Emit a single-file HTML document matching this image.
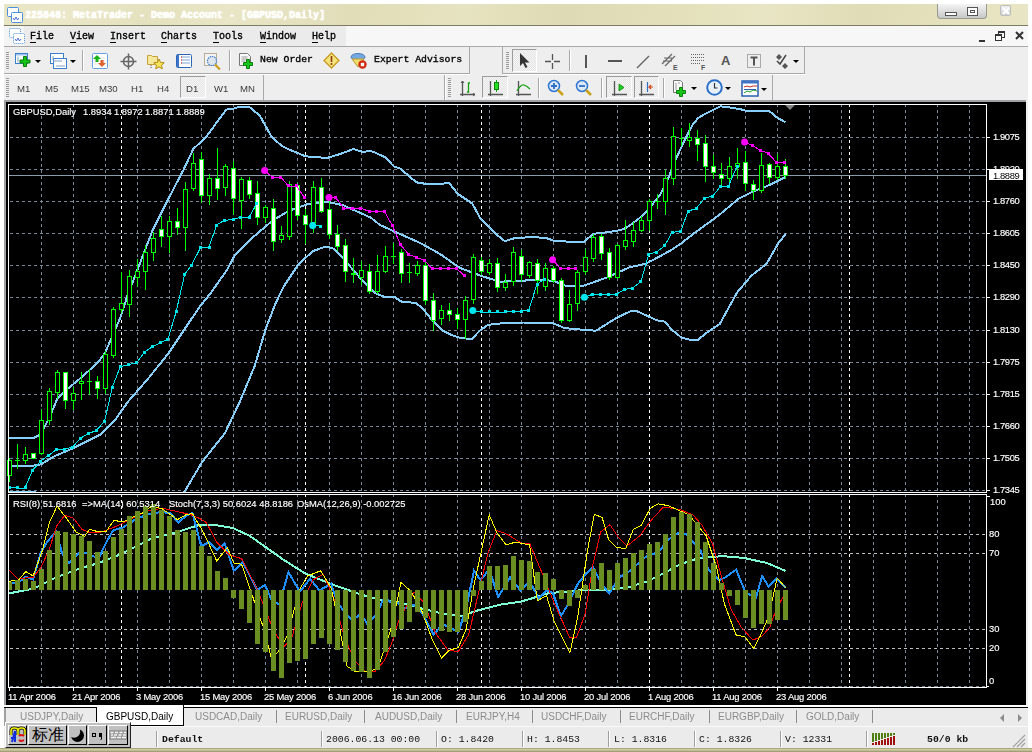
<!DOCTYPE html>
<html><head><meta charset="utf-8">
<style>
*{margin:0;padding:0;box-sizing:border-box}
html,body{width:1032px;height:752px;overflow:hidden;background:#fff}
body{position:relative;font-family:"Liberation Sans",sans-serif}
.abs{position:absolute}
#title{position:absolute;left:4px;top:4px;width:1024px;height:22px;background:linear-gradient(100deg,#e8e5c4 0%,#ebe8ca 6%,#e4e1be 14%,#e9e6c7 22%,#e1ddb9 34%,#e6e3c0 45%,#dedab5 55%,#e3e0bb 66%,#e8e5c4 74%,#e0dcb7 84%,#e9e6c5 100%);border-bottom:1px solid #7d7b63}
#title .t{position:absolute;left:21px;top:5px;font:bold 10px/13px "Liberation Mono",monospace;color:#ffffff;text-shadow:0 0 1px #fff,0 0 2px #fffff0}
#menu{position:absolute;left:4px;top:26px;width:1024px;height:21px;background:#f7f7f7;border-bottom:1px solid #a9a9a9}
#menu .lp{position:absolute;left:20px;top:0;width:322px;height:20px;background:#ebebeb}
#menu .ic{position:absolute;left:0;top:0;width:20px;height:20px;background:#f4f4f4}
.mi{position:absolute;top:5px;font:10px/12px "Liberation Mono",monospace;color:#000;-webkit-text-stroke:0.35px #000}
.mi u{text-decoration:none;border-bottom:1px solid #000}
.tb{position:absolute;background:#eeeeee}
.grip{position:absolute;width:3px;background:repeating-linear-gradient(180deg,#9a9a9a 0 1px,transparent 1px 2px)}
.vsep{position:absolute;width:2px;border-left:1px solid #a8a8a8;border-right:1px solid #fff}
.pressed{position:absolute;border-top:1px solid #9c9c9c;border-left:1px solid #9c9c9c;border-right:1px solid #fff;border-bottom:1px solid #fff;background-color:#f6f6f6;background-image:linear-gradient(45deg,#e4e4e4 25%,transparent 25%,transparent 75%,#e4e4e4 75%),linear-gradient(45deg,#e4e4e4 25%,transparent 25%,transparent 75%,#e4e4e4 75%);background-size:2px 2px;background-position:0 0,1px 1px}
.tt{position:absolute;font:9.8px/12px "Liberation Mono",monospace;color:#000;-webkit-text-stroke:0.35px #000}
.tf{position:absolute;font:9.6px/12px "Liberation Sans",sans-serif;color:#3c3c3c}
.ct{position:absolute;font:9.4px/12px "Liberation Sans",sans-serif;color:#fff;white-space:pre;-webkit-text-stroke:0.15px #fff;will-change:transform}
.cp{letter-spacing:-0.4px}
.cd{letter-spacing:-0.2px}
.pricebox{position:absolute;left:989px;top:169px;width:34px;height:11px;background:#fff;color:#000;font:9.4px/11px "Liberation Sans",sans-serif;padding-left:4px;letter-spacing:-0.4px;will-change:transform;border-top:1px solid #fff}
.pricebox:before{content:"";position:absolute;left:-2px;top:-1px;width:2px;height:1px;background:#fff}
#tabs{position:absolute;left:4px;top:705px;width:1024px;height:23px;background:#ebebeb}
.tab{position:absolute;top:6px;font:10px/12px "Liberation Sans",sans-serif;color:#8c8c8c;white-space:pre}
.tsep{position:absolute;top:5px;width:1px;height:13px;background:#8c8c8c}
#status{position:absolute;left:4px;top:728px;width:1024px;height:20px;background:#ebebeb}
.st{position:absolute;top:6px;font:9.8px/12px "Liberation Mono",monospace;color:#111;white-space:pre}
.ssep{position:absolute;top:3px;width:2px;height:16px;border-left:1px solid #a0a0a0;border-right:1px solid #fff}
#bottom{position:absolute;left:0;top:748px;width:1032px;height:4px;background:linear-gradient(180deg,#8c8a5c 0,#c8c59a 1px,#d9d6ae 2px,#a19f75 3px)}
.tf,.tt,.st,.tab,.mi,#title .t{will-change:transform}
</style></head><body>
<div id="title">
 <svg class="abs" style="left:3px;top:3px" width="16" height="16" viewBox="0 0 16 16"><rect x="0.5" y="0.5" width="11" height="9" rx="1" fill="#fff" stroke="#4a90d9"/><rect x="4.5" y="5.5" width="11" height="10" rx="1" fill="#fff" stroke="#4a90d9"/><path d="M6 11l1.5 2 1.5-3 1.5 3 1.5-2" stroke="#4a6fd9" fill="none"/></svg>
 <div class="t">225848: MetaTrader - Demo Account - [GBPUSD,Daily]</div>
 <div class="abs" style="left:933px;top:0px;width:50px;height:15px;border:1px solid #9a9a90;border-top:none;border-radius:0 0 4px 4px;background:linear-gradient(180deg,#f4f4f4,#c8c8c8)"></div>
 <div class="abs" style="left:941px;top:8px;width:12px;height:4px;border:1px solid #555;background:#fff"></div>
 <div class="abs" style="left:963px;top:3px;width:11px;height:9px;border:1px solid #555;background:#fff"><div class="abs" style="left:2px;top:2px;width:5px;height:3px;border:1px solid #555"></div></div>
 <div class="abs" style="left:996px;top:1px;width:11px;height:11px;background:linear-gradient(180deg,#f2f2f2,#cfcfcf);border:1px solid #bdbdbd;border-radius:2px"></div>
 <svg class="abs" style="left:997px;top:2px" width="10" height="10"><path d="M2 2L8 8M8 2L2 8" stroke="#fff" stroke-width="2.2"/></svg>
</div>
<div id="menu">
 <div class="ic"></div><div class="lp"></div>
 <svg class="abs" style="left:5px;top:2px" width="16" height="16" viewBox="0 0 16 16"><rect x="0.5" y="0.5" width="11" height="9" rx="1" fill="#fff" stroke="#4a90d9" stroke-dasharray="1 1"/><rect x="4.5" y="5.5" width="11" height="10" rx="1" fill="#fff" stroke="#4a90d9" stroke-dasharray="1 1"/><path d="M6 11l1.5 2 1.5-3 1.5 3 1.5-2" stroke="#4a6fd9" fill="none"/></svg>
 <div class="mi" style="left:26px"><u>F</u>ile</div>
 <div class="mi" style="left:66px"><u>V</u>iew</div>
 <div class="mi" style="left:106px"><u>I</u>nsert</div>
 <div class="mi" style="left:157px"><u>C</u>harts</div>
 <div class="mi" style="left:209px"><u>T</u>ools</div>
 <div class="mi" style="left:256px"><u>W</u>indow</div>
 <div class="mi" style="left:308px"><u>H</u>elp</div>
 <div class="abs" style="left:975px;top:14px;width:6px;height:2px;background:#333"></div>
 <div class="abs" style="left:994px;top:5px;width:7px;height:7px;border:1px solid #333;border-top-width:2px"></div>
 <div class="abs" style="left:991px;top:8px;width:7px;height:7px;border:1px solid #333;border-top-width:2px;background:#f7f7f7"></div>
 <svg class="abs" style="left:1011px;top:5px" width="10" height="10"><path d="M1 1L8 8M8 1L1 8" stroke="#333" stroke-width="2"/></svg>
</div>
<div class="tb" style="left:4px;top:47px;width:1024px;height:53px"></div>
<!-- row1 group1 -->
<div class="abs" style="left:4px;top:47px;width:466px;height:27px;border-right:1px solid #a8a8a8;border-bottom:1px solid #a8a8a8"></div>
<div class="abs" style="left:4px;top:74px;width:466px;height:1px;background:#fff"></div>
<div class="grip" style="left:6px;top:52px;height:18px"></div>
<svg class="abs" style="left:14px;top:52px" width="28" height="18">
 <rect x="1.5" y="1.5" width="12" height="10" fill="#fff" stroke="#3d7fcc"/><rect x="2" y="2" width="11" height="1.5" fill="#9cc3ee"/>
 <path d="M4 4.5v6" stroke="#8aa2bf"/>
 <path d="M9.5 4.5h3v3.5h3.5v3h-3.5v3.5h-3v-3.5h-3.5v-3h3.5z" fill="#16c416" stroke="#0b7f0b"/>
 <path d="M21 8h6l-3 3z" fill="#000"/>
</svg>
<svg class="abs" style="left:49px;top:52px" width="28" height="18">
 <rect x="1.5" y="1.5" width="13" height="10" fill="#fff" stroke="#3d7fcc"/><rect x="4.5" y="6.5" width="13" height="10" fill="#fff" stroke="#3d7fcc"/>
 <path d="M4 9h9M7 14h9M4 4v4" stroke="#7f9fc2"/>
 <path d="M21 8h6l-3 3z" fill="#000"/>
</svg>
<div class="vsep" style="left:82px;top:50px;height:21px"></div>
<svg class="abs" style="left:91px;top:52px" width="18" height="18">
 <rect x="1.5" y="1.5" width="15" height="15" rx="1" fill="#fff" stroke="#62a0e0"/>
 <path d="M3 6h11M3 9h11M3 12h11" stroke="#e4e4e4"/>
 <path d="M6 3l4 4h-2.5v3h-3v-3H2z" fill="#17b317"/><path d="M11 15l-4-4h2.5v-3h3v3H15z" fill="#e0602a"/>
</svg>
<svg class="abs" style="left:120px;top:53px" width="17" height="17">
 <circle cx="8.5" cy="8.5" r="5" fill="none" stroke="#666" stroke-width="1.5"/><path d="M8.5 0.5v16M0.5 8.5h16" stroke="#666" stroke-width="1.5"/>
</svg>
<svg class="abs" style="left:146px;top:52px" width="20" height="18">
 <path d="M1.5 3.5h4l1 1h5v8h-10z" fill="#f6e89a" stroke="#c6a23a"/><path d="M5 13v4" stroke="#555" stroke-dasharray="1 1"/>
 <path d="M13 7l1.6 3.4 3.6.4-2.7 2.4.8 3.6-3.3-1.9-3.3 1.9.8-3.6-2.7-2.4 3.6-.4z" fill="#f7e35c" stroke="#b48a10"/>
</svg>
<svg class="abs" style="left:175px;top:53px" width="18" height="16">
 <rect x="1.5" y="1.5" width="15" height="13" rx="1" fill="#fff" stroke="#2c66b8"/>
 <rect x="2" y="2" width="2" height="12" fill="#3d75c8"/>
 <path d="M6 4h9M6 7h9M6 10h9" stroke="#7ea3d6"/><path d="M6 4h1M6 7h1M6 10h1" stroke="#e02020"/>
</svg>
<svg class="abs" style="left:203px;top:53px" width="20" height="18">
 <rect x="1.5" y="0.5" width="12" height="12" fill="#f3f3f3" stroke="#b8ae98"/>
 <circle cx="9" cy="8" r="4.5" fill="#dfe6ee" stroke="#3f7fd0" stroke-width="1.2" stroke-dasharray="1.5 0.8"/>
 <path d="M12 11.5l5 5" stroke="#c8a020" stroke-width="2.2"/>
</svg>
<div class="vsep" style="left:229px;top:50px;height:21px"></div>
<svg class="abs" style="left:238px;top:52px" width="18" height="19">
 <path d="M1.5 1.5h8l3 3v9h-11z" fill="#fafafa" stroke="#777"/><path d="M3.5 5h6M3.5 7h6M3.5 9h4" stroke="#999"/>
 <path d="M8.5 7.5h3v3h3v3h-3v3h-3v-3h-3v-3h3z" fill="#18c418" stroke="#0b800b"/>
</svg>
<div class="tt" style="left:260px;top:54px">New Order</div>
<svg class="abs" style="left:323px;top:52px" width="17" height="17">
 <path d="M8.5 1L16 8.5L8.5 16L1 8.5z" fill="#f5e27a" stroke="#c79b20" stroke-width="1.3"/>
 <path d="M8.5 4v6" stroke="#8b3a1a" stroke-width="1.6"/><circle cx="8.5" cy="12" r="1" fill="#8b3a1a"/>
</svg>
<svg class="abs" style="left:350px;top:52px" width="18" height="18">
 <ellipse cx="8" cy="5" rx="7" ry="3.5" fill="#76a9e0" stroke="#4a7bb8"/>
 <path d="M2 7l6 8 6-8z" fill="#f2dd6a" stroke="#b89a30"/>
 <circle cx="12.5" cy="12.5" r="4.2" fill="#d02a10"/><rect x="10.8" y="10.8" width="3.4" height="3.4" fill="#fff"/>
</svg>
<div class="tt" style="left:374px;top:54px">Expert Advisors</div>
<!-- row1 group gap and group2 -->
<div class="abs" style="left:502px;top:47px;width:1px;height:27px;background:#a8a8a8"></div>
<div class="abs" style="left:503px;top:47px;width:302px;height:27px;border-right:1px solid #a8a8a8;border-bottom:1px solid #a8a8a8"></div>
<div class="abs" style="left:503px;top:74px;width:302px;height:1px;background:#fff"></div>
<div class="grip" style="left:506px;top:52px;height:18px"></div>
<div class="pressed" style="left:512px;top:49px;width:25px;height:23px"></div>
<svg class="abs" style="left:517px;top:52px" width="14" height="17"><path d="M3 1v13l3-3 2.5 5 2-1-2.5-4.5h4.5z" fill="#333"/></svg>
<svg class="abs" style="left:544px;top:53px" width="17" height="17"><path d="M8.5 1v15M1 8.5h15" stroke="#555" stroke-width="1.3"/><rect x="7" y="7" width="3" height="3" fill="#eee"/></svg>
<div class="vsep" style="left:569px;top:50px;height:21px"></div>
<div class="abs" style="left:585px;top:55px;width:2px;height:13px;background:#555"></div>
<div class="abs" style="left:608px;top:60px;width:14px;height:2px;background:#555"></div>
<svg class="abs" style="left:636px;top:55px" width="14" height="14"><path d="M1 13L13 1" stroke="#666" stroke-width="1.5"/></svg>
<svg class="abs" style="left:661px;top:53px" width="18" height="17"><path d="M1 11L11 1M4 13L14 3M2 8l9 0M3 5l8 0" stroke="#666" stroke-width="1.2"/><text x="12" y="17" font-family="Liberation Sans" font-weight="bold" font-size="7" fill="#555">E</text></svg>
<svg class="abs" style="left:690px;top:53px" width="18" height="17"><path d="M1 1.5h13M1 4.5h13M1 7.5h13M1 10.5h9" stroke="#666" stroke-dasharray="1 1"/><text x="11" y="17" font-family="Liberation Sans" font-weight="bold" font-size="7" fill="#555">F</text></svg>
<div class="abs" style="left:721px;top:52px;font:bold 13px/17px 'Liberation Sans',sans-serif;color:#555">A</div>
<svg class="abs" style="left:747px;top:53px" width="15" height="16"><rect x="0.5" y="1.5" width="13" height="13" fill="none" stroke="#666" stroke-dasharray="1 1"/><path d="M3.5 4.5h7M7 4.5v8" stroke="#555" stroke-width="2"/></svg>
<svg class="abs" style="left:775px;top:53px" width="25" height="17"><path d="M4 1l3 3-3 3-3-3z M10 10l3 3-3 3-3-3z" fill="#555"/><path d="M2 8l3 3 6-9" stroke="#444" stroke-width="1.5" fill="none"/><path d="M18 7h6l-3 3z" fill="#000"/></svg>
<!-- row2 group1 -->
<div class="abs" style="left:4px;top:75px;width:260px;height:25px;border-right:1px solid #a8a8a8"></div>
<div class="grip" style="left:6px;top:78px;height:19px"></div>
<div class="pressed" style="left:180px;top:76px;width:26px;height:22px"></div>
<div class="tf" style="left:17px;top:83px">M1</div>
<div class="tf" style="left:45px;top:83px">M5</div>
<div class="tf" style="left:71px;top:83px">M15</div>
<div class="tf" style="left:99px;top:83px">M30</div>
<div class="tf" style="left:131px;top:83px">H1</div>
<div class="tf" style="left:157px;top:83px">H4</div>
<div class="tf" style="left:186px;top:83px">D1</div>
<div class="tf" style="left:214px;top:83px">W1</div>
<div class="tf" style="left:240px;top:83px">MN</div>
<!-- row2 group2 -->
<div class="vsep" style="left:444px;top:75px;height:25px"></div>
<div class="abs" style="left:446px;top:75px;width:327px;height:25px;border-right:1px solid #a8a8a8"></div>
<div class="grip" style="left:448px;top:78px;height:19px"></div>
<svg class="abs" style="left:459px;top:80px" width="17" height="17"><path d="M3.5 1v15M1 14.5h15" stroke="#555" stroke-width="1.3"/><path d="M2 3l1.5-2 1.5 2M14 13l2 1.5-2 1.5" stroke="#555" fill="none"/><path d="M8 12h1.5V3H11" stroke="#10a010" stroke-width="1.3" fill="none"/></svg>
<div class="pressed" style="left:482px;top:76px;width:26px;height:22px"></div>
<svg class="abs" style="left:487px;top:80px" width="17" height="17"><path d="M3.5 1v15M1 14.5h15" stroke="#555" stroke-width="1.3"/><path d="M9.5 0v12" stroke="#10a010"/><rect x="7.5" y="2.5" width="4" height="7" fill="#20e020" stroke="#108010"/></svg>
<svg class="abs" style="left:515px;top:80px" width="17" height="17"><path d="M3.5 1v15M1 14.5h15" stroke="#555" stroke-width="1.3"/><path d="M2 11q4-7 7-6t6 4" stroke="#10a010" stroke-width="1.2" fill="none"/></svg>
<div class="vsep" style="left:538px;top:78px;height:20px"></div>
<svg class="abs" style="left:547px;top:79px" width="18" height="18"><circle cx="7" cy="7" r="5.5" fill="#dce9f7" stroke="#2d76d2" stroke-width="1.5"/><path d="M4 7h6M7 4v6" stroke="#2d6fc0" stroke-width="1.8"/><path d="M11 11l5 5" stroke="#c9a21a" stroke-width="2.5"/></svg>
<svg class="abs" style="left:575px;top:79px" width="18" height="18"><circle cx="7" cy="7" r="5.5" fill="#dce9f7" stroke="#2d76d2" stroke-width="1.5"/><path d="M4 7h6" stroke="#2d6fc0" stroke-width="1.8"/><path d="M11 11l5 5" stroke="#c9a21a" stroke-width="2.5"/></svg>
<div class="vsep" style="left:601px;top:78px;height:20px"></div>
<div class="pressed" style="left:606px;top:76px;width:26px;height:22px"></div>
<svg class="abs" style="left:611px;top:80px" width="17" height="17"><path d="M3.5 1v15M1 14.5h15" stroke="#555" stroke-width="1.3"/><path d="M8 4l5 3.5-5 3.5z" fill="#20d020" stroke="#108010" stroke-width="0.8"/></svg>
<div class="pressed" style="left:634px;top:76px;width:25px;height:22px"></div>
<svg class="abs" style="left:638px;top:80px" width="17" height="17"><path d="M3.5 1v15M1 14.5h15" stroke="#555" stroke-width="1.3"/><path d="M9.5 2v10" stroke="#2d6fc0" stroke-width="1.2"/><path d="M15 7h-4M13 5l-2 2 2 2" stroke="#d04010" stroke-width="1.2" fill="none"/></svg>
<div class="vsep" style="left:663px;top:78px;height:20px"></div>
<svg class="abs" style="left:672px;top:79px" width="26" height="19"><path d="M1.5 1.5h7l2 2v10h-9z" fill="#fafafa" stroke="#777"/><path d="M4 4v7M6 4h2" stroke="#999"/><path d="M7.5 8.5h3v3h3v3h-3v3h-3v-3h-3v-3h3z" fill="#18c418" stroke="#0b800b"/><path d="M19 8h6l-3 3z" fill="#000"/></svg>
<svg class="abs" style="left:706px;top:79px" width="26" height="18"><circle cx="8.5" cy="8.5" r="7.3" fill="#e8f0fa" stroke="#2a6fc8" stroke-width="2"/><path d="M8.5 4v5h3" stroke="#333" stroke-width="1.2" fill="none"/><path d="M19 8h6l-3 3z" fill="#000"/></svg>
<svg class="abs" style="left:741px;top:80px" width="26" height="17"><rect x="1" y="1" width="16" height="15" fill="#fff" stroke="#2a5fb0" stroke-width="1.5"/><rect x="1" y="1" width="16" height="2.5" fill="#3d74c6"/><path d="M3 7l3-1 3 1 3-1 4 0" stroke="#c03020" fill="none"/><path d="M3 13l3-2 3 1 3-2 4 1" stroke="#20a020" fill="none"/><path d="M3 9.5h12" stroke="#2a5fb0"/><path d="M20 8h6l-3 3z" fill="#000"/></svg>

<div class="abs" style="left:4px;top:100px;width:1024px;height:1px;background:#a0a0a0"></div>
<div class="abs" style="left:4px;top:101px;width:1022px;height:1px;background:#a0a0a8"></div>
<div class="abs" style="left:4px;top:100px;width:1px;height:605px;background:#a0a0a0"></div>
<div class="abs" style="left:5px;top:100px;width:1px;height:605px;background:#a0a0a8"></div>
<div class="abs" style="left:1026px;top:100px;width:2px;height:605px;background:#f0f0f0"></div>
<svg width="1032" height="752" style="position:absolute;left:0;top:0"><rect x="6" y="102" width="1020" height="603" fill="#000"/><path d="M41.5 104V492 M73.5 104V492 M105.5 104V492 M137.5 104V492 M169.5 104V492 M201.5 104V492 M233.5 104V492 M265.5 104V492 M297.5 104V492 M329.5 104V492 M361.5 104V492 M393.5 104V492 M425.5 104V492 M457.5 104V492 M489.5 104V492 M521.5 104V492 M553.5 104V492 M585.5 104V492 M617.5 104V492 M649.5 104V492 M681.5 104V492 M713.5 104V492 M745.5 104V492 M777.5 104V492 M809.5 104V492 M841.5 104V492 M873.5 104V492 M905.5 104V492 M937.5 104V492 M969.5 104V492 M10 137.5H986 M10 169.5H986 M10 201.5H986 M10 233.5H986 M10 265.5H986 M10 297.5H986 M10 330.5H986 M10 362.5H986 M10 394.5H986 M10 426.5H986 M10 458.5H986 M10 490.5H986" stroke="#778899" stroke-width="1" stroke-dasharray="3 3" fill="none" shape-rendering="crispEdges"/><path d="M41.5 494V687 M73.5 494V687 M105.5 494V687 M137.5 494V687 M169.5 494V687 M201.5 494V687 M233.5 494V687 M265.5 494V687 M297.5 494V687 M329.5 494V687 M361.5 494V687 M393.5 494V687 M425.5 494V687 M457.5 494V687 M489.5 494V687 M521.5 494V687 M553.5 494V687 M585.5 494V687 M617.5 494V687 M649.5 494V687 M681.5 494V687 M713.5 494V687 M745.5 494V687 M777.5 494V687 M809.5 494V687 M841.5 494V687 M873.5 494V687 M905.5 494V687 M937.5 494V687 M969.5 494V687 M10 686.5H986" stroke="#778899" stroke-width="1" stroke-dasharray="3 3" fill="none" shape-rendering="crispEdges"/><path d="M10 534.5H986 M10 553.5H986 M10 629.5H986 M10 648.5H986" stroke="#C0C0C0" stroke-width="1" stroke-dasharray="3 3" fill="none" shape-rendering="crispEdges"/><path d="M121.5 104V492M121.5 494V687 M305.5 104V492M305.5 494V687 M481.5 104V492M481.5 494V687 M649.5 104V492M649.5 494V687 M849.5 104V492M849.5 494V687" stroke="#FFFFFF" stroke-width="1" stroke-dasharray="3 3" fill="none" shape-rendering="crispEdges"/><path d="M9 175.5H986" stroke="#8C9BAA" stroke-width="1" shape-rendering="crispEdges"/><g fill="none" stroke="#87CEFA" stroke-width="2" stroke-linejoin="round" shape-rendering="crispEdges"><polyline points="8.0,438.0 29.4,438.0 32.7,438.5 40.9,434.4 50.4,415.3 57.2,399.0 65.4,390.8 81.7,377.2 98.1,362.2 104.9,353.2 111.7,337.7 119.9,318.6 129.4,290.0 133.5,280.0 137.0,271.0 152.6,230.4 169.4,196.9 183.7,169.4 193.3,149.0 206.0,137.0 226.3,109.6 234.6,108.4 239.4,106.7 249.0,106.7 259.8,115.6 271.7,137.0 281.3,145.5 288.0,149.0 305.5,156.3 327.0,158.0 339.0,154.4 353.4,149.0 363.0,152.0 370.0,150.8 376.4,153.1 385.2,157.4 393.9,166.4 400.3,168.6 416.3,182.3 425.8,183.9 441.8,183.9 448.9,182.6 457.7,193.8 472.1,203.4 480.0,217.7 485.6,223.9 495.1,233.5 504.7,241.1 514.3,238.3 531.0,237.1 545.4,237.8 555.0,241.1 576.0,241.9 584.0,241.7 593.5,233.8 607.9,232.2 620.0,230.2 626.4,227.7 637.0,220.2 647.7,210.6 660.0,194.8 666.8,181.9 673.6,164.3 680.4,149.3 687.1,135.1 692.6,124.9 698.0,118.1 704.8,114.1 712.9,110.0 720.0,106.4 725.4,106.7 739.8,109.1 749.3,111.5 758.6,110.8 768.9,110.8 777.2,117.7 785.6,122.3"/><polyline points="8.0,465.7 32.7,465.7 40.9,464.4 54.5,456.2 73.6,448.0 100.8,434.4 114.4,420.8 128.0,401.7 147.1,379.9 168.9,352.7 190.7,320.0 200.0,306.3 210.0,294.0 227.0,270.0 234.5,255.8 253.6,236.7 272.7,220.4 289.0,210.8 308.0,204.0 327.2,201.8 343.6,205.4 370.9,217.7 380.0,225.0 400.0,234.0 419.9,242.9 439.8,253.8 459.7,267.8 479.7,275.4 499.6,281.7 519.6,280.8 539.5,279.8 553.5,280.8 565.4,285.7 580.0,285.7 583.3,285.8 606.5,277.7 629.8,267.2 646.0,263.7 662.3,255.0 673.0,249.0 681.0,243.5 694.5,233.0 700.0,229.0 719.1,215.0 738.3,199.0 752.6,191.8 770.2,184.7 786.1,176.7"/><polyline points="184.3,492.0 202.4,461.6 224.9,433.2 239.8,401.7 254.8,365.8 265.3,330.0 275.7,303.0 284.0,286.0 298.4,264.4 312.7,251.2 325.9,246.5 334.2,248.9 342.6,257.2 353.4,270.4 365.3,283.5 374.9,293.1 384.0,296.7 394.4,296.9 401.5,301.7 415.9,302.9 423.0,308.9 432.6,320.8 442.2,330.4 451.8,335.2 461.3,338.3 472.1,338.8 480.0,330.4 488.0,324.9 502.3,323.2 523.8,322.5 552.6,323.2 564.5,328.0 576.0,329.2 595.9,330.7 615.1,318.8 630.6,311.1 636.6,311.1 649.6,316.9 656.0,320.1 664.7,321.7 671.9,329.7 681.5,337.7 689.4,339.7 698.2,339.7 705.4,333.7 719.7,324.1 729.3,306.6 737.3,292.2 751.6,275.5 766.0,264.3 769.4,258.8 778.1,243.7 786.1,233.3"/></g><path d="M9 491.5H36" stroke="#87CEFA" stroke-width="1" shape-rendering="crispEdges"/><g><path d="M9.5 458V482" stroke="#00FF00" stroke-width="1" shape-rendering="crispEdges"/><rect x="7.5" y="460.5" width="4" height="15" fill="#000000" stroke="#00FF00" stroke-width="1" shape-rendering="crispEdges"/><path d="M17.5 444V469" stroke="#00FF00" stroke-width="1" shape-rendering="crispEdges"/><rect x="15" y="460" width="5" height="1" fill="#00FF00" shape-rendering="crispEdges"/><path d="M25.5 447V464" stroke="#00FF00" stroke-width="1" shape-rendering="crispEdges"/><rect x="23.5" y="454.5" width="4" height="6" fill="#000000" stroke="#00FF00" stroke-width="1" shape-rendering="crispEdges"/><path d="M33.5 453V459" stroke="#00FF00" stroke-width="1" shape-rendering="crispEdges"/><rect x="31.5" y="453.5" width="4" height="5" fill="#FFFFFF" stroke="#00FF00" stroke-width="1" shape-rendering="crispEdges"/><path d="M41.5 409V455" stroke="#00FF00" stroke-width="1" shape-rendering="crispEdges"/><rect x="39.5" y="420.5" width="4" height="33" fill="#000000" stroke="#00FF00" stroke-width="1" shape-rendering="crispEdges"/><path d="M49.5 388V425" stroke="#00FF00" stroke-width="1" shape-rendering="crispEdges"/><rect x="47.5" y="391.5" width="4" height="29" fill="#000000" stroke="#00FF00" stroke-width="1" shape-rendering="crispEdges"/><path d="M57.5 370V399" stroke="#00FF00" stroke-width="1" shape-rendering="crispEdges"/><rect x="55.5" y="372.5" width="4" height="20" fill="#000000" stroke="#00FF00" stroke-width="1" shape-rendering="crispEdges"/><path d="M65.5 372V409" stroke="#00FF00" stroke-width="1" shape-rendering="crispEdges"/><rect x="63.5" y="372.5" width="4" height="28" fill="#FFFFFF" stroke="#00FF00" stroke-width="1" shape-rendering="crispEdges"/><path d="M73.5 387V410" stroke="#00FF00" stroke-width="1" shape-rendering="crispEdges"/><rect x="71.5" y="393.5" width="4" height="7" fill="#000000" stroke="#00FF00" stroke-width="1" shape-rendering="crispEdges"/><path d="M81.5 372V400" stroke="#00FF00" stroke-width="1" shape-rendering="crispEdges"/><rect x="79.5" y="381.5" width="4" height="2" fill="#000000" stroke="#00FF00" stroke-width="1" shape-rendering="crispEdges"/><path d="M89.5 369V395" stroke="#00FF00" stroke-width="1" shape-rendering="crispEdges"/><rect x="87" y="381" width="5" height="1" fill="#00FF00" shape-rendering="crispEdges"/><path d="M97.5 376V399" stroke="#00FF00" stroke-width="1" shape-rendering="crispEdges"/><rect x="95.5" y="381.5" width="4" height="7" fill="#FFFFFF" stroke="#00FF00" stroke-width="1" shape-rendering="crispEdges"/><path d="M105.5 351V394" stroke="#00FF00" stroke-width="1" shape-rendering="crispEdges"/><rect x="103.5" y="354.5" width="4" height="34" fill="#000000" stroke="#00FF00" stroke-width="1" shape-rendering="crispEdges"/><path d="M113.5 307V358" stroke="#00FF00" stroke-width="1" shape-rendering="crispEdges"/><rect x="111.5" y="309.5" width="4" height="46" fill="#000000" stroke="#00FF00" stroke-width="1" shape-rendering="crispEdges"/><path d="M121.5 272V313" stroke="#00FF00" stroke-width="1" shape-rendering="crispEdges"/><rect x="119.5" y="303.5" width="4" height="6" fill="#000000" stroke="#00FF00" stroke-width="1" shape-rendering="crispEdges"/><path d="M129.5 270V317" stroke="#00FF00" stroke-width="1" shape-rendering="crispEdges"/><rect x="127.5" y="276.5" width="4" height="28" fill="#000000" stroke="#00FF00" stroke-width="1" shape-rendering="crispEdges"/><path d="M137.5 259V287" stroke="#00FF00" stroke-width="1" shape-rendering="crispEdges"/><rect x="135.5" y="271.5" width="4" height="6" fill="#000000" stroke="#00FF00" stroke-width="1" shape-rendering="crispEdges"/><path d="M145.5 245V290" stroke="#00FF00" stroke-width="1" shape-rendering="crispEdges"/><rect x="143.5" y="252.5" width="4" height="19" fill="#000000" stroke="#00FF00" stroke-width="1" shape-rendering="crispEdges"/><path d="M153.5 232V261" stroke="#00FF00" stroke-width="1" shape-rendering="crispEdges"/><rect x="151.5" y="238.5" width="4" height="14" fill="#000000" stroke="#00FF00" stroke-width="1" shape-rendering="crispEdges"/><path d="M161.5 216V247" stroke="#00FF00" stroke-width="1" shape-rendering="crispEdges"/><rect x="159.5" y="229.5" width="4" height="7" fill="#FFFFFF" stroke="#00FF00" stroke-width="1" shape-rendering="crispEdges"/><path d="M169.5 216V253" stroke="#00FF00" stroke-width="1" shape-rendering="crispEdges"/><rect x="167.5" y="221.5" width="4" height="15" fill="#000000" stroke="#00FF00" stroke-width="1" shape-rendering="crispEdges"/><path d="M177.5 208V235" stroke="#00FF00" stroke-width="1" shape-rendering="crispEdges"/><rect x="175.5" y="221.5" width="4" height="6" fill="#FFFFFF" stroke="#00FF00" stroke-width="1" shape-rendering="crispEdges"/><path d="M185.5 182V251" stroke="#00FF00" stroke-width="1" shape-rendering="crispEdges"/><rect x="183.5" y="189.5" width="4" height="38" fill="#000000" stroke="#00FF00" stroke-width="1" shape-rendering="crispEdges"/><path d="M193.5 153V191" stroke="#00FF00" stroke-width="1" shape-rendering="crispEdges"/><rect x="191.5" y="163.5" width="4" height="25" fill="#000000" stroke="#00FF00" stroke-width="1" shape-rendering="crispEdges"/><path d="M201.5 152V203" stroke="#00FF00" stroke-width="1" shape-rendering="crispEdges"/><rect x="199.5" y="159.5" width="4" height="36" fill="#FFFFFF" stroke="#00FF00" stroke-width="1" shape-rendering="crispEdges"/><path d="M209.5 174V205" stroke="#00FF00" stroke-width="1" shape-rendering="crispEdges"/><rect x="207.5" y="178.5" width="4" height="17" fill="#000000" stroke="#00FF00" stroke-width="1" shape-rendering="crispEdges"/><path d="M217.5 148V200" stroke="#00FF00" stroke-width="1" shape-rendering="crispEdges"/><rect x="215.5" y="178.5" width="4" height="10" fill="#FFFFFF" stroke="#00FF00" stroke-width="1" shape-rendering="crispEdges"/><path d="M225.5 164V196" stroke="#00FF00" stroke-width="1" shape-rendering="crispEdges"/><rect x="223.5" y="166.5" width="4" height="21" fill="#000000" stroke="#00FF00" stroke-width="1" shape-rendering="crispEdges"/><path d="M233.5 161V215" stroke="#00FF00" stroke-width="1" shape-rendering="crispEdges"/><rect x="231.5" y="168.5" width="4" height="30" fill="#FFFFFF" stroke="#00FF00" stroke-width="1" shape-rendering="crispEdges"/><path d="M241.5 177V229" stroke="#00FF00" stroke-width="1" shape-rendering="crispEdges"/><rect x="239.5" y="179.5" width="4" height="21" fill="#000000" stroke="#00FF00" stroke-width="1" shape-rendering="crispEdges"/><path d="M249.5 177V199" stroke="#00FF00" stroke-width="1" shape-rendering="crispEdges"/><rect x="247.5" y="180.5" width="4" height="14" fill="#FFFFFF" stroke="#00FF00" stroke-width="1" shape-rendering="crispEdges"/><path d="M257.5 181V225" stroke="#00FF00" stroke-width="1" shape-rendering="crispEdges"/><rect x="255.5" y="193.5" width="4" height="24" fill="#FFFFFF" stroke="#00FF00" stroke-width="1" shape-rendering="crispEdges"/><path d="M265.5 205V223" stroke="#00FF00" stroke-width="1" shape-rendering="crispEdges"/><rect x="263.5" y="207.5" width="4" height="10" fill="#000000" stroke="#00FF00" stroke-width="1" shape-rendering="crispEdges"/><path d="M273.5 199V251" stroke="#00FF00" stroke-width="1" shape-rendering="crispEdges"/><rect x="271.5" y="208.5" width="4" height="33" fill="#FFFFFF" stroke="#00FF00" stroke-width="1" shape-rendering="crispEdges"/><path d="M281.5 226V243" stroke="#00FF00" stroke-width="1" shape-rendering="crispEdges"/><rect x="279.5" y="235.5" width="4" height="4" fill="#000000" stroke="#00FF00" stroke-width="1" shape-rendering="crispEdges"/><path d="M289.5 181V240" stroke="#00FF00" stroke-width="1" shape-rendering="crispEdges"/><rect x="287.5" y="184.5" width="4" height="52" fill="#000000" stroke="#00FF00" stroke-width="1" shape-rendering="crispEdges"/><path d="M297.5 183V220" stroke="#00FF00" stroke-width="1" shape-rendering="crispEdges"/><rect x="295.5" y="185.5" width="4" height="30" fill="#FFFFFF" stroke="#00FF00" stroke-width="1" shape-rendering="crispEdges"/><path d="M305.5 209V244" stroke="#00FF00" stroke-width="1" shape-rendering="crispEdges"/><rect x="303.5" y="215.5" width="4" height="9" fill="#FFFFFF" stroke="#00FF00" stroke-width="1" shape-rendering="crispEdges"/><path d="M313.5 181V233" stroke="#00FF00" stroke-width="1" shape-rendering="crispEdges"/><rect x="311.5" y="187.5" width="4" height="35" fill="#000000" stroke="#00FF00" stroke-width="1" shape-rendering="crispEdges"/><path d="M321.5 178V213" stroke="#00FF00" stroke-width="1" shape-rendering="crispEdges"/><rect x="319.5" y="187.5" width="4" height="24" fill="#FFFFFF" stroke="#00FF00" stroke-width="1" shape-rendering="crispEdges"/><path d="M329.5 201V239" stroke="#00FF00" stroke-width="1" shape-rendering="crispEdges"/><rect x="327.5" y="209.5" width="4" height="25" fill="#FFFFFF" stroke="#00FF00" stroke-width="1" shape-rendering="crispEdges"/><path d="M337.5 225V251" stroke="#00FF00" stroke-width="1" shape-rendering="crispEdges"/><rect x="335.5" y="234.5" width="4" height="12" fill="#FFFFFF" stroke="#00FF00" stroke-width="1" shape-rendering="crispEdges"/><path d="M345.5 239V282" stroke="#00FF00" stroke-width="1" shape-rendering="crispEdges"/><rect x="343.5" y="245.5" width="4" height="26" fill="#FFFFFF" stroke="#00FF00" stroke-width="1" shape-rendering="crispEdges"/><path d="M353.5 258V283" stroke="#00FF00" stroke-width="1" shape-rendering="crispEdges"/><rect x="351.5" y="273.5" width="4" height="1" fill="#000000" stroke="#00FF00" stroke-width="1" shape-rendering="crispEdges"/><path d="M361.5 261V285" stroke="#00FF00" stroke-width="1" shape-rendering="crispEdges"/><rect x="359.5" y="270.5" width="4" height="7" fill="#000000" stroke="#00FF00" stroke-width="1" shape-rendering="crispEdges"/><path d="M369.5 264V294" stroke="#00FF00" stroke-width="1" shape-rendering="crispEdges"/><rect x="367.5" y="271.5" width="4" height="20" fill="#FFFFFF" stroke="#00FF00" stroke-width="1" shape-rendering="crispEdges"/><path d="M377.5 255V294" stroke="#00FF00" stroke-width="1" shape-rendering="crispEdges"/><rect x="375.5" y="271.5" width="4" height="20" fill="#000000" stroke="#00FF00" stroke-width="1" shape-rendering="crispEdges"/><path d="M385.5 246V273" stroke="#00FF00" stroke-width="1" shape-rendering="crispEdges"/><rect x="383.5" y="256.5" width="4" height="15" fill="#000000" stroke="#00FF00" stroke-width="1" shape-rendering="crispEdges"/><path d="M393.5 243V264" stroke="#00FF00" stroke-width="1" shape-rendering="crispEdges"/><rect x="391" y="256" width="5" height="1" fill="#00FF00" shape-rendering="crispEdges"/><path d="M401.5 249V283" stroke="#00FF00" stroke-width="1" shape-rendering="crispEdges"/><rect x="399.5" y="252.5" width="4" height="21" fill="#FFFFFF" stroke="#00FF00" stroke-width="1" shape-rendering="crispEdges"/><path d="M409.5 263V283" stroke="#00FF00" stroke-width="1" shape-rendering="crispEdges"/><rect x="407" y="272" width="5" height="1" fill="#00FF00" shape-rendering="crispEdges"/><path d="M417.5 261V276" stroke="#00FF00" stroke-width="1" shape-rendering="crispEdges"/><rect x="415.5" y="265.5" width="4" height="8" fill="#000000" stroke="#00FF00" stroke-width="1" shape-rendering="crispEdges"/><path d="M425.5 259V305" stroke="#00FF00" stroke-width="1" shape-rendering="crispEdges"/><rect x="423.5" y="265.5" width="4" height="35" fill="#FFFFFF" stroke="#00FF00" stroke-width="1" shape-rendering="crispEdges"/><path d="M433.5 293V331" stroke="#00FF00" stroke-width="1" shape-rendering="crispEdges"/><rect x="431.5" y="300.5" width="4" height="20" fill="#FFFFFF" stroke="#00FF00" stroke-width="1" shape-rendering="crispEdges"/><path d="M441.5 305V325" stroke="#00FF00" stroke-width="1" shape-rendering="crispEdges"/><rect x="439.5" y="310.5" width="4" height="8" fill="#000000" stroke="#00FF00" stroke-width="1" shape-rendering="crispEdges"/><path d="M449.5 303V321" stroke="#00FF00" stroke-width="1" shape-rendering="crispEdges"/><rect x="447.5" y="310.5" width="4" height="4" fill="#FFFFFF" stroke="#00FF00" stroke-width="1" shape-rendering="crispEdges"/><path d="M457.5 308V329" stroke="#00FF00" stroke-width="1" shape-rendering="crispEdges"/><rect x="455.5" y="314.5" width="4" height="5" fill="#FFFFFF" stroke="#00FF00" stroke-width="1" shape-rendering="crispEdges"/><path d="M465.5 296V339" stroke="#00FF00" stroke-width="1" shape-rendering="crispEdges"/><rect x="463.5" y="300.5" width="4" height="19" fill="#000000" stroke="#00FF00" stroke-width="1" shape-rendering="crispEdges"/><path d="M473.5 254V304" stroke="#00FF00" stroke-width="1" shape-rendering="crispEdges"/><rect x="471.5" y="257.5" width="4" height="42" fill="#000000" stroke="#00FF00" stroke-width="1" shape-rendering="crispEdges"/><path d="M481.5 257V275" stroke="#00FF00" stroke-width="1" shape-rendering="crispEdges"/><rect x="479.5" y="260.5" width="4" height="11" fill="#FFFFFF" stroke="#00FF00" stroke-width="1" shape-rendering="crispEdges"/><path d="M489.5 259V275" stroke="#00FF00" stroke-width="1" shape-rendering="crispEdges"/><rect x="487.5" y="263.5" width="4" height="9" fill="#000000" stroke="#00FF00" stroke-width="1" shape-rendering="crispEdges"/><path d="M497.5 258V292" stroke="#00FF00" stroke-width="1" shape-rendering="crispEdges"/><rect x="495.5" y="263.5" width="4" height="24" fill="#FFFFFF" stroke="#00FF00" stroke-width="1" shape-rendering="crispEdges"/><path d="M505.5 274V291" stroke="#00FF00" stroke-width="1" shape-rendering="crispEdges"/><rect x="503.5" y="282.5" width="4" height="5" fill="#000000" stroke="#00FF00" stroke-width="1" shape-rendering="crispEdges"/><path d="M513.5 247V286" stroke="#00FF00" stroke-width="1" shape-rendering="crispEdges"/><rect x="511.5" y="252.5" width="4" height="29" fill="#000000" stroke="#00FF00" stroke-width="1" shape-rendering="crispEdges"/><path d="M521.5 250V282" stroke="#00FF00" stroke-width="1" shape-rendering="crispEdges"/><rect x="519.5" y="256.5" width="4" height="18" fill="#FFFFFF" stroke="#00FF00" stroke-width="1" shape-rendering="crispEdges"/><path d="M529.5 261V278" stroke="#00FF00" stroke-width="1" shape-rendering="crispEdges"/><rect x="527.5" y="262.5" width="4" height="13" fill="#000000" stroke="#00FF00" stroke-width="1" shape-rendering="crispEdges"/><path d="M537.5 259V294" stroke="#00FF00" stroke-width="1" shape-rendering="crispEdges"/><rect x="535.5" y="263.5" width="4" height="17" fill="#FFFFFF" stroke="#00FF00" stroke-width="1" shape-rendering="crispEdges"/><path d="M545.5 263V291" stroke="#00FF00" stroke-width="1" shape-rendering="crispEdges"/><rect x="543.5" y="268.5" width="4" height="18" fill="#000000" stroke="#00FF00" stroke-width="1" shape-rendering="crispEdges"/><path d="M553.5 266V283" stroke="#00FF00" stroke-width="1" shape-rendering="crispEdges"/><rect x="551.5" y="268.5" width="4" height="12" fill="#FFFFFF" stroke="#00FF00" stroke-width="1" shape-rendering="crispEdges"/><path d="M561.5 278V323" stroke="#00FF00" stroke-width="1" shape-rendering="crispEdges"/><rect x="559.5" y="280.5" width="4" height="40" fill="#FFFFFF" stroke="#00FF00" stroke-width="1" shape-rendering="crispEdges"/><path d="M569.5 290V322" stroke="#00FF00" stroke-width="1" shape-rendering="crispEdges"/><rect x="567.5" y="304.5" width="4" height="16" fill="#000000" stroke="#00FF00" stroke-width="1" shape-rendering="crispEdges"/><path d="M577.5 270V311" stroke="#00FF00" stroke-width="1" shape-rendering="crispEdges"/><rect x="575.5" y="272.5" width="4" height="31" fill="#000000" stroke="#00FF00" stroke-width="1" shape-rendering="crispEdges"/><path d="M585.5 249V275" stroke="#00FF00" stroke-width="1" shape-rendering="crispEdges"/><rect x="583.5" y="257.5" width="4" height="14" fill="#000000" stroke="#00FF00" stroke-width="1" shape-rendering="crispEdges"/><path d="M593.5 234V262" stroke="#00FF00" stroke-width="1" shape-rendering="crispEdges"/><rect x="591.5" y="237.5" width="4" height="21" fill="#000000" stroke="#00FF00" stroke-width="1" shape-rendering="crispEdges"/><path d="M601.5 234V260" stroke="#00FF00" stroke-width="1" shape-rendering="crispEdges"/><rect x="599.5" y="236.5" width="4" height="17" fill="#FFFFFF" stroke="#00FF00" stroke-width="1" shape-rendering="crispEdges"/><path d="M609.5 248V280" stroke="#00FF00" stroke-width="1" shape-rendering="crispEdges"/><rect x="607.5" y="252.5" width="4" height="25" fill="#FFFFFF" stroke="#00FF00" stroke-width="1" shape-rendering="crispEdges"/><path d="M617.5 244V279" stroke="#00FF00" stroke-width="1" shape-rendering="crispEdges"/><rect x="615.5" y="245.5" width="4" height="32" fill="#000000" stroke="#00FF00" stroke-width="1" shape-rendering="crispEdges"/><path d="M625.5 220V250" stroke="#00FF00" stroke-width="1" shape-rendering="crispEdges"/><rect x="623.5" y="240.5" width="4" height="6" fill="#000000" stroke="#00FF00" stroke-width="1" shape-rendering="crispEdges"/><path d="M633.5 222V247" stroke="#00FF00" stroke-width="1" shape-rendering="crispEdges"/><rect x="631.5" y="230.5" width="4" height="11" fill="#000000" stroke="#00FF00" stroke-width="1" shape-rendering="crispEdges"/><path d="M641.5 216V232" stroke="#00FF00" stroke-width="1" shape-rendering="crispEdges"/><rect x="639.5" y="220.5" width="4" height="10" fill="#000000" stroke="#00FF00" stroke-width="1" shape-rendering="crispEdges"/><path d="M649.5 199V231" stroke="#00FF00" stroke-width="1" shape-rendering="crispEdges"/><rect x="647.5" y="201.5" width="4" height="19" fill="#000000" stroke="#00FF00" stroke-width="1" shape-rendering="crispEdges"/><path d="M657.5 194V209" stroke="#00FF00" stroke-width="1" shape-rendering="crispEdges"/><rect x="655" y="201" width="5" height="1" fill="#00FF00" shape-rendering="crispEdges"/><path d="M665.5 170V215" stroke="#00FF00" stroke-width="1" shape-rendering="crispEdges"/><rect x="663.5" y="178.5" width="4" height="23" fill="#000000" stroke="#00FF00" stroke-width="1" shape-rendering="crispEdges"/><path d="M673.5 127V185" stroke="#00FF00" stroke-width="1" shape-rendering="crispEdges"/><rect x="671.5" y="136.5" width="4" height="42" fill="#000000" stroke="#00FF00" stroke-width="1" shape-rendering="crispEdges"/><path d="M681.5 128V146" stroke="#00FF00" stroke-width="1" shape-rendering="crispEdges"/><rect x="679" y="138" width="5" height="1" fill="#00FF00" shape-rendering="crispEdges"/><path d="M689.5 123V147" stroke="#00FF00" stroke-width="1" shape-rendering="crispEdges"/><rect x="687.5" y="137.5" width="4" height="3" fill="#000000" stroke="#00FF00" stroke-width="1" shape-rendering="crispEdges"/><path d="M697.5 130V161" stroke="#00FF00" stroke-width="1" shape-rendering="crispEdges"/><rect x="695.5" y="138.5" width="4" height="6" fill="#FFFFFF" stroke="#00FF00" stroke-width="1" shape-rendering="crispEdges"/><path d="M705.5 135V182" stroke="#00FF00" stroke-width="1" shape-rendering="crispEdges"/><rect x="703.5" y="143.5" width="4" height="23" fill="#FFFFFF" stroke="#00FF00" stroke-width="1" shape-rendering="crispEdges"/><path d="M713.5 155V179" stroke="#00FF00" stroke-width="1" shape-rendering="crispEdges"/><rect x="711.5" y="166.5" width="4" height="6" fill="#FFFFFF" stroke="#00FF00" stroke-width="1" shape-rendering="crispEdges"/><path d="M721.5 163V187" stroke="#00FF00" stroke-width="1" shape-rendering="crispEdges"/><rect x="719.5" y="174.5" width="4" height="4" fill="#FFFFFF" stroke="#00FF00" stroke-width="1" shape-rendering="crispEdges"/><path d="M729.5 157V183" stroke="#00FF00" stroke-width="1" shape-rendering="crispEdges"/><rect x="727.5" y="166.5" width="4" height="12" fill="#000000" stroke="#00FF00" stroke-width="1" shape-rendering="crispEdges"/><path d="M737.5 148V179" stroke="#00FF00" stroke-width="1" shape-rendering="crispEdges"/><rect x="735.5" y="163.5" width="4" height="3" fill="#000000" stroke="#00FF00" stroke-width="1" shape-rendering="crispEdges"/><path d="M745.5 151V191" stroke="#00FF00" stroke-width="1" shape-rendering="crispEdges"/><rect x="743.5" y="162.5" width="4" height="21" fill="#FFFFFF" stroke="#00FF00" stroke-width="1" shape-rendering="crispEdges"/><path d="M753.5 180V200" stroke="#00FF00" stroke-width="1" shape-rendering="crispEdges"/><rect x="751.5" y="184.5" width="4" height="6" fill="#FFFFFF" stroke="#00FF00" stroke-width="1" shape-rendering="crispEdges"/><path d="M761.5 153V193" stroke="#00FF00" stroke-width="1" shape-rendering="crispEdges"/><rect x="759.5" y="165.5" width="4" height="25" fill="#000000" stroke="#00FF00" stroke-width="1" shape-rendering="crispEdges"/><path d="M769.5 163V184" stroke="#00FF00" stroke-width="1" shape-rendering="crispEdges"/><rect x="767.5" y="164.5" width="4" height="13" fill="#FFFFFF" stroke="#00FF00" stroke-width="1" shape-rendering="crispEdges"/><path d="M777.5 154V180" stroke="#00FF00" stroke-width="1" shape-rendering="crispEdges"/><rect x="775.5" y="166.5" width="4" height="11" fill="#000000" stroke="#00FF00" stroke-width="1" shape-rendering="crispEdges"/><path d="M785.5 159V179" stroke="#00FF00" stroke-width="1" shape-rendering="crispEdges"/><rect x="783.5" y="166.5" width="4" height="9" fill="#FFFFFF" stroke="#00FF00" stroke-width="1" shape-rendering="crispEdges"/></g><polyline points="9.0,487.8 17.0,488.0 25.0,488.0 32.4,470.4 40.4,461.4 48.4,455.4 56.3,449.8 64.6,449.1 72.7,447.0 80.5,438.1 88.4,433.6 96.5,430.4 104.6,421.1 112.4,387.0 120.2,366.8 128.7,364.7 136.6,362.6 144.3,352.3 152.6,346.6 160.6,342.8 168.0,339.0 176.2,311.5 184.7,274.3 191.6,265.0 200.4,247.8 209.0,247.0 216.7,225.0 224.4,220.3 233.0,219.6 240.6,217.2 249.0,217.2 256.9,203.3" fill="none" stroke="#00E5EE" stroke-width="1" shape-rendering="crispEdges"/><rect x="8" y="486" width="3" height="3" fill="#00E5EE" shape-rendering="crispEdges"/><rect x="16" y="486" width="3" height="3" fill="#00E5EE" shape-rendering="crispEdges"/><rect x="24" y="486" width="3" height="3" fill="#00E5EE" shape-rendering="crispEdges"/><rect x="31" y="469" width="3" height="3" fill="#00E5EE" shape-rendering="crispEdges"/><rect x="39" y="460" width="3" height="3" fill="#00E5EE" shape-rendering="crispEdges"/><rect x="47" y="454" width="3" height="3" fill="#00E5EE" shape-rendering="crispEdges"/><rect x="55" y="448" width="3" height="3" fill="#00E5EE" shape-rendering="crispEdges"/><rect x="63" y="448" width="3" height="3" fill="#00E5EE" shape-rendering="crispEdges"/><rect x="71" y="446" width="3" height="3" fill="#00E5EE" shape-rendering="crispEdges"/><rect x="79" y="437" width="3" height="3" fill="#00E5EE" shape-rendering="crispEdges"/><rect x="87" y="432" width="3" height="3" fill="#00E5EE" shape-rendering="crispEdges"/><rect x="95" y="429" width="3" height="3" fill="#00E5EE" shape-rendering="crispEdges"/><rect x="103" y="420" width="3" height="3" fill="#00E5EE" shape-rendering="crispEdges"/><rect x="111" y="386" width="3" height="3" fill="#00E5EE" shape-rendering="crispEdges"/><rect x="119" y="365" width="3" height="3" fill="#00E5EE" shape-rendering="crispEdges"/><rect x="127" y="363" width="3" height="3" fill="#00E5EE" shape-rendering="crispEdges"/><rect x="135" y="361" width="3" height="3" fill="#00E5EE" shape-rendering="crispEdges"/><rect x="143" y="351" width="3" height="3" fill="#00E5EE" shape-rendering="crispEdges"/><rect x="151" y="345" width="3" height="3" fill="#00E5EE" shape-rendering="crispEdges"/><rect x="159" y="341" width="3" height="3" fill="#00E5EE" shape-rendering="crispEdges"/><rect x="166" y="338" width="3" height="3" fill="#00E5EE" shape-rendering="crispEdges"/><rect x="175" y="310" width="3" height="3" fill="#00E5EE" shape-rendering="crispEdges"/><rect x="183" y="273" width="3" height="3" fill="#00E5EE" shape-rendering="crispEdges"/><rect x="190" y="264" width="3" height="3" fill="#00E5EE" shape-rendering="crispEdges"/><rect x="199" y="246" width="3" height="3" fill="#00E5EE" shape-rendering="crispEdges"/><rect x="208" y="246" width="3" height="3" fill="#00E5EE" shape-rendering="crispEdges"/><rect x="215" y="224" width="3" height="3" fill="#00E5EE" shape-rendering="crispEdges"/><rect x="223" y="219" width="3" height="3" fill="#00E5EE" shape-rendering="crispEdges"/><rect x="232" y="218" width="3" height="3" fill="#00E5EE" shape-rendering="crispEdges"/><rect x="239" y="216" width="3" height="3" fill="#00E5EE" shape-rendering="crispEdges"/><rect x="248" y="216" width="3" height="3" fill="#00E5EE" shape-rendering="crispEdges"/><rect x="255" y="202" width="3" height="3" fill="#00E5EE" shape-rendering="crispEdges"/><polyline points="312.7,225.6 320.4,226.1" fill="none" stroke="#00E5EE" stroke-width="1" shape-rendering="crispEdges"/><circle cx="312.7" cy="225.6" r="3.5" fill="#00E5EE"/><rect x="319" y="225" width="3" height="3" fill="#00E5EE" shape-rendering="crispEdges"/><polyline points="472.8,310.5 481.0,312.0 489.0,312.0 497.0,312.0 505.0,312.0 513.0,311.5 521.0,311.0 528.6,310.5 537.0,284.2 544.9,279.0" fill="none" stroke="#00E5EE" stroke-width="1" shape-rendering="crispEdges"/><circle cx="472.8" cy="310.5" r="3.5" fill="#00E5EE"/><rect x="480" y="310" width="3" height="3" fill="#00E5EE" shape-rendering="crispEdges"/><rect x="488" y="310" width="3" height="3" fill="#00E5EE" shape-rendering="crispEdges"/><rect x="496" y="310" width="3" height="3" fill="#00E5EE" shape-rendering="crispEdges"/><rect x="504" y="310" width="3" height="3" fill="#00E5EE" shape-rendering="crispEdges"/><rect x="512" y="310" width="3" height="3" fill="#00E5EE" shape-rendering="crispEdges"/><rect x="520" y="310" width="3" height="3" fill="#00E5EE" shape-rendering="crispEdges"/><rect x="527" y="309" width="3" height="3" fill="#00E5EE" shape-rendering="crispEdges"/><rect x="536" y="283" width="3" height="3" fill="#00E5EE" shape-rendering="crispEdges"/><rect x="543" y="278" width="3" height="3" fill="#00E5EE" shape-rendering="crispEdges"/><polyline points="584.4,297.2 592.3,294.4 600.3,294.4 608.3,294.4 616.3,294.4 624.2,289.6 632.3,288.1 640.9,281.7 648.7,254.3 656.6,252.1 664.7,245.7 672.1,232.3 680.6,231.5 688.1,211.1 696.2,208.5 704.5,198.2 712.8,196.1 720.4,186.6 728.4,186.3 737.0,166.3" fill="none" stroke="#00E5EE" stroke-width="1" shape-rendering="crispEdges"/><circle cx="584.4" cy="297.2" r="3.5" fill="#00E5EE"/><rect x="591" y="293" width="3" height="3" fill="#00E5EE" shape-rendering="crispEdges"/><rect x="599" y="293" width="3" height="3" fill="#00E5EE" shape-rendering="crispEdges"/><rect x="607" y="293" width="3" height="3" fill="#00E5EE" shape-rendering="crispEdges"/><rect x="615" y="293" width="3" height="3" fill="#00E5EE" shape-rendering="crispEdges"/><rect x="623" y="288" width="3" height="3" fill="#00E5EE" shape-rendering="crispEdges"/><rect x="631" y="287" width="3" height="3" fill="#00E5EE" shape-rendering="crispEdges"/><rect x="639" y="280" width="3" height="3" fill="#00E5EE" shape-rendering="crispEdges"/><rect x="647" y="253" width="3" height="3" fill="#00E5EE" shape-rendering="crispEdges"/><rect x="655" y="251" width="3" height="3" fill="#00E5EE" shape-rendering="crispEdges"/><rect x="663" y="244" width="3" height="3" fill="#00E5EE" shape-rendering="crispEdges"/><rect x="671" y="231" width="3" height="3" fill="#00E5EE" shape-rendering="crispEdges"/><rect x="679" y="230" width="3" height="3" fill="#00E5EE" shape-rendering="crispEdges"/><rect x="687" y="210" width="3" height="3" fill="#00E5EE" shape-rendering="crispEdges"/><rect x="695" y="207" width="3" height="3" fill="#00E5EE" shape-rendering="crispEdges"/><rect x="703" y="197" width="3" height="3" fill="#00E5EE" shape-rendering="crispEdges"/><rect x="711" y="195" width="3" height="3" fill="#00E5EE" shape-rendering="crispEdges"/><rect x="719" y="185" width="3" height="3" fill="#00E5EE" shape-rendering="crispEdges"/><rect x="727" y="185" width="3" height="3" fill="#00E5EE" shape-rendering="crispEdges"/><rect x="736" y="165" width="3" height="3" fill="#00E5EE" shape-rendering="crispEdges"/><polyline points="264.6,170.6 272.2,177.0 280.8,177.0 288.3,186.0 296.4,186.0 304.3,197.4" fill="none" stroke="#FF00FF" stroke-width="1" shape-rendering="crispEdges"/><circle cx="264.6" cy="170.6" r="3.5" fill="#FF00FF"/><rect x="271" y="176" width="3" height="3" fill="#FF00FF" shape-rendering="crispEdges"/><rect x="279" y="176" width="3" height="3" fill="#FF00FF" shape-rendering="crispEdges"/><rect x="287" y="184" width="3" height="3" fill="#FF00FF" shape-rendering="crispEdges"/><rect x="295" y="184" width="3" height="3" fill="#FF00FF" shape-rendering="crispEdges"/><rect x="303" y="196" width="3" height="3" fill="#FF00FF" shape-rendering="crispEdges"/><polyline points="329.0,197.4 336.0,198.0 343.8,208.2 352.9,208.2 360.6,208.2 369.0,211.3 376.8,211.3 384.4,211.3 392.4,225.8 400.3,244.3 408.7,254.5 416.4,257.4 424.3,260.3 432.2,268.7 440.3,268.7 448.9,268.7 456.6,268.7 464.2,275.4" fill="none" stroke="#FF00FF" stroke-width="1" shape-rendering="crispEdges"/><circle cx="329.0" cy="197.4" r="3.5" fill="#FF00FF"/><rect x="334" y="196" width="3" height="3" fill="#FF00FF" shape-rendering="crispEdges"/><rect x="342" y="207" width="3" height="3" fill="#FF00FF" shape-rendering="crispEdges"/><rect x="351" y="207" width="3" height="3" fill="#FF00FF" shape-rendering="crispEdges"/><rect x="359" y="207" width="3" height="3" fill="#FF00FF" shape-rendering="crispEdges"/><rect x="368" y="210" width="3" height="3" fill="#FF00FF" shape-rendering="crispEdges"/><rect x="375" y="210" width="3" height="3" fill="#FF00FF" shape-rendering="crispEdges"/><rect x="383" y="210" width="3" height="3" fill="#FF00FF" shape-rendering="crispEdges"/><rect x="391" y="224" width="3" height="3" fill="#FF00FF" shape-rendering="crispEdges"/><rect x="399" y="243" width="3" height="3" fill="#FF00FF" shape-rendering="crispEdges"/><rect x="407" y="253" width="3" height="3" fill="#FF00FF" shape-rendering="crispEdges"/><rect x="415" y="256" width="3" height="3" fill="#FF00FF" shape-rendering="crispEdges"/><rect x="423" y="259" width="3" height="3" fill="#FF00FF" shape-rendering="crispEdges"/><rect x="431" y="267" width="3" height="3" fill="#FF00FF" shape-rendering="crispEdges"/><rect x="439" y="267" width="3" height="3" fill="#FF00FF" shape-rendering="crispEdges"/><rect x="447" y="267" width="3" height="3" fill="#FF00FF" shape-rendering="crispEdges"/><rect x="455" y="267" width="3" height="3" fill="#FF00FF" shape-rendering="crispEdges"/><rect x="463" y="274" width="3" height="3" fill="#FF00FF" shape-rendering="crispEdges"/><polyline points="552.6,259.8 560.2,268.2 568.1,268.2 576.0,268.2" fill="none" stroke="#FF00FF" stroke-width="1" shape-rendering="crispEdges"/><circle cx="552.6" cy="259.8" r="3.5" fill="#FF00FF"/><rect x="559" y="267" width="3" height="3" fill="#FF00FF" shape-rendering="crispEdges"/><rect x="567" y="267" width="3" height="3" fill="#FF00FF" shape-rendering="crispEdges"/><rect x="574" y="267" width="3" height="3" fill="#FF00FF" shape-rendering="crispEdges"/><polyline points="744.6,141.9 752.1,145.3 760.5,150.3 768.3,153.4 776.3,162.4 784.7,162.4" fill="none" stroke="#FF00FF" stroke-width="1" shape-rendering="crispEdges"/><circle cx="744.6" cy="141.9" r="3.5" fill="#FF00FF"/><rect x="751" y="144" width="3" height="3" fill="#FF00FF" shape-rendering="crispEdges"/><rect x="759" y="149" width="3" height="3" fill="#FF00FF" shape-rendering="crispEdges"/><rect x="767" y="152" width="3" height="3" fill="#FF00FF" shape-rendering="crispEdges"/><rect x="775" y="161" width="3" height="3" fill="#FF00FF" shape-rendering="crispEdges"/><rect x="783" y="161" width="3" height="3" fill="#FF00FF" shape-rendering="crispEdges"/><path d="M784 104H796L790 110Z" fill="#808080"/><rect x="8.5" y="104.5" width="978" height="388" fill="none" stroke="#FFF" stroke-width="1" shape-rendering="crispEdges"/><rect x="8.5" y="494.5" width="978" height="193" fill="none" stroke="#FFF" stroke-width="1" shape-rendering="crispEdges"/><clipPath id="sub"><rect x="9" y="495" width="977" height="192"/></clipPath><g clip-path="url(#sub)"><polyline points="8.9,593.4 33.8,588.5 56.4,577.2 79.0,568.7 98.7,563.0 120.0,554.6 126.0,551.5 152.1,538.3 178.1,531.8 200.0,524.7 216.8,525.3 232.5,527.9 250.0,536.0 283.5,559.8 305.8,573.8 333.7,585.0 361.7,594.7 381.2,600.3 398.0,601.7 417.5,607.3 445.5,614.3 462.3,615.7 479.0,610.0 501.3,604.5 520.0,601.7 528.3,599.5 549.1,593.0 567.3,591.7 584.0,589.8 600.8,590.4 626.9,587.8 647.7,581.2 665.9,572.1 680.0,564.3 696.9,558.7 721.7,556.1 743.8,557.9 767.3,563.1 785.6,571.0" fill="none" stroke="#7FFFD4" stroke-width="2" shape-rendering="crispEdges"/><polyline points="8.9,583.7 18.3,583.0 25.4,576.7 33.1,579.4 40.9,552.0 48.0,540.7 56.4,531.5 62.0,553.3 69.1,563.2 79.0,553.3 86.1,552.6 94.5,556.8 98.7,558.2 107.2,540.5 113.0,530.5 123.4,527.3 136.5,518.7 146.9,514.8 159.9,512.2 170.3,512.8 178.1,522.6 185.9,516.1 192.4,512.8 201.2,546.1 209.0,542.2 216.8,550.0 224.6,543.5 233.8,570.8 242.9,562.2 257.2,589.8 265.0,585.1 271.5,599.5 279.3,604.7 288.4,572.1 299.8,591.7 310.2,578.6 319.3,590.4 331.1,583.8 337.6,603.4 351.9,620.3 361.0,613.8 367.5,624.2 376.6,613.8 384.4,596.9 392.0,603.4 398.4,603.4 403.6,608.6 414.0,604.7 421.9,612.5 433.6,634.6 442.7,624.2 450.5,628.1 458.3,632.0 466.1,608.6 474.0,570.8 480.5,580.0 489.2,569.5 498.3,596.9 510.0,577.3 520.5,590.4 529.6,581.2 538.7,598.2 546.5,590.4 553.0,593.0 560.8,616.4 568.6,603.4 577.8,583.8 585.2,574.7 593.0,566.9 600.8,582.5 609.2,593.5 619.1,577.3 626.9,573.4 637.3,564.3 647.7,555.2 658.1,552.6 668.5,539.6 680.0,531.8 686.4,534.4 700.9,551.3 708.7,569.6 719.1,580.0 725.6,577.4 736.1,569.6 745.2,591.7 755.7,598.3 762.2,576.1 768.6,586.6 776.4,578.8 785.6,587.9" fill="none" stroke="#1E90FF" stroke-width="2" shape-rendering="crispEdges"/><polyline points="8.9,570.2 18.3,579.4 25.4,578.0 33.1,577.3 40.9,567.4 49.4,549.0 56.4,526.4 64.9,515.2 73.3,518.0 81.8,529.3 90.2,532.8 101.5,532.0 115.6,526.6 131.3,518.7 146.9,510.9 162.5,508.3 178.1,511.7 191.1,514.8 200.0,518.7 206.4,522.6 216.8,542.2 229.9,555.2 241.6,558.6 255.9,586.4 265.0,608.6 274.1,632.0 284.5,646.3 292.0,637.2 302.4,602.1 312.8,580.0 323.3,574.2 333.7,598.2 344.1,635.9 354.5,660.7 364.9,671.1 375.3,671.1 384.4,660.7 392.0,642.4 398.4,621.6 414.0,591.7 424.5,603.4 434.9,632.0 447.9,650.3 458.3,651.6 468.7,634.6 479.1,590.4 488.0,552.6 497.0,530.5 507.4,534.4 521.8,543.5 529.6,543.5 543.9,577.3 554.3,603.4 569.9,637.8 576.4,637.8 585.2,613.8 593.0,564.3 600.8,531.8 609.9,524.7 619.1,538.3 626.9,546.1 639.9,535.7 650.3,521.3 663.3,507.0 680.0,509.6 693.0,514.9 702.1,525.3 712.5,543.6 721.7,577.5 730.8,608.8 741.2,627.1 753.0,640.1 762.1,636.2 769.9,627.1 776.4,608.8 783.0,597.1" fill="none" stroke="#FF0000" stroke-width="1" shape-rendering="crispEdges"/><polyline points="8.9,581.2 18.0,580.5 25.8,571.6 33.1,576.0 42.3,550.7 49.4,522.5 57.1,506.0 66.3,518.0 76.1,532.0 84.6,536.3 89.6,529.2 98.7,532.0 106.2,531.2 114.0,520.4 123.3,522.0 131.0,518.0 143.4,512.6 151.2,506.4 162.0,508.7 177.5,519.6 185.9,514.8 192.4,513.5 203.8,533.0 216.8,561.2 227.3,547.4 233.8,563.0 241.6,564.3 255.9,606.0 265.0,632.0 271.5,659.4 279.3,650.3 287.1,635.9 299.8,589.0 307.6,576.0 320.6,570.8 331.1,587.8 338.9,624.2 346.7,665.9 354.5,671.1 362.3,671.1 370.1,671.1 377.9,668.5 383.1,652.9 392.0,625.5 401.0,582.5 411.4,591.7 421.9,611.2 432.3,639.8 441.4,658.1 449.2,650.3 458.3,647.6 466.1,629.4 474.0,585.1 489.2,514.8 497.0,533.0 506.1,544.8 515.3,542.2 529.6,544.8 537.4,600.8 546.5,595.6 554.3,621.6 569.9,652.9 577.8,616.4 587.8,548.7 594.3,514.3 602.1,517.4 608.6,539.6 616.5,547.4 625.6,548.7 633.4,529.2 641.2,525.3 650.3,508.3 658.1,503.9 668.5,505.7 680.0,510.9 689.0,514.9 706.1,535.7 716.5,567.0 724.3,603.5 736.0,634.9 745.1,637.0 753.7,648.4 760.8,634.9 768.6,616.6 777.2,578.0 785.6,587.9" fill="none" stroke="#FFFF00" stroke-width="1" shape-rendering="crispEdges"/><g fill="#6B8E23" shape-rendering="crispEdges"><rect x="7" y="582.0" width="5" height="8.0"/><rect x="15" y="580.0" width="5" height="10.0"/><rect x="23" y="579.0" width="5" height="11.0"/><rect x="31" y="581.0" width="5" height="9.0"/><rect x="39" y="569.0" width="5" height="21.0"/><rect x="47" y="550.0" width="5" height="40.0"/><rect x="55" y="531.0" width="5" height="59.0"/><rect x="63" y="532.0" width="5" height="58.0"/><rect x="71" y="534.0" width="5" height="56.0"/><rect x="79" y="536.0" width="5" height="54.0"/><rect x="87" y="541.0" width="5" height="49.0"/><rect x="95" y="552.0" width="5" height="38.0"/><rect x="103" y="551.0" width="5" height="39.0"/><rect x="111" y="537.0" width="5" height="53.0"/><rect x="119" y="529.0" width="5" height="61.0"/><rect x="127" y="516.0" width="5" height="74.0"/><rect x="135" y="511.0" width="5" height="79.0"/><rect x="143" y="506.0" width="5" height="84.0"/><rect x="151" y="504.0" width="5" height="86.0"/><rect x="159" y="510.0" width="5" height="80.0"/><rect x="167" y="516.0" width="5" height="74.0"/><rect x="175" y="530.0" width="5" height="60.0"/><rect x="183" y="532.0" width="5" height="58.0"/><rect x="191" y="530.0" width="5" height="60.0"/><rect x="199" y="546.0" width="5" height="44.0"/><rect x="207" y="556.0" width="5" height="34.0"/><rect x="215" y="571.0" width="5" height="19.0"/><rect x="223" y="578.0" width="5" height="12.0"/><rect x="231" y="590" width="5" height="8"/><rect x="239" y="590" width="5" height="19"/><rect x="247" y="590" width="5" height="33"/><rect x="255" y="590" width="5" height="54"/><rect x="263" y="590" width="5" height="62"/><rect x="271" y="590" width="5" height="81"/><rect x="279" y="590" width="5" height="88"/><rect x="287" y="590" width="5" height="73"/><rect x="295" y="590" width="5" height="71"/><rect x="303" y="590" width="5" height="69"/><rect x="311" y="590" width="5" height="54"/><rect x="319" y="590" width="5" height="48"/><rect x="327" y="590" width="5" height="54"/><rect x="335" y="590" width="5" height="60"/><rect x="343" y="590" width="5" height="72"/><rect x="351" y="590" width="5" height="81"/><rect x="359" y="590" width="5" height="82"/><rect x="367" y="590" width="5" height="88"/><rect x="375" y="590" width="5" height="80"/><rect x="383" y="590" width="5" height="62"/><rect x="391" y="590" width="5" height="47"/><rect x="399" y="590" width="5" height="39"/><rect x="407" y="590" width="5" height="32"/><rect x="415" y="590" width="5" height="22"/><rect x="423" y="590" width="5" height="28"/><rect x="431" y="590" width="5" height="39"/><rect x="439" y="590" width="5" height="41"/><rect x="447" y="590" width="5" height="42"/><rect x="455" y="590" width="5" height="42"/><rect x="463" y="590" width="5" height="32"/><rect x="471" y="590" width="5" height="6"/><rect x="479" y="581.0" width="5" height="9.0"/><rect x="487" y="566.0" width="5" height="24.0"/><rect x="495" y="566.0" width="5" height="24.0"/><rect x="503" y="565.0" width="5" height="25.0"/><rect x="511" y="556.0" width="5" height="34.0"/><rect x="519" y="560.0" width="5" height="30.0"/><rect x="527" y="561.0" width="5" height="29.0"/><rect x="535" y="572.0" width="5" height="18.0"/><rect x="543" y="573.0" width="5" height="17.0"/><rect x="551" y="579.0" width="5" height="11.0"/><rect x="559" y="590" width="5" height="9"/><rect x="567" y="590" width="5" height="16"/><rect x="575" y="590" width="5" height="8"/><rect x="583" y="585.0" width="5" height="5.0"/><rect x="591" y="569.0" width="5" height="21.0"/><rect x="599" y="563.0" width="5" height="27.0"/><rect x="607" y="570.0" width="5" height="20.0"/><rect x="615" y="563.0" width="5" height="27.0"/><rect x="623" y="558.0" width="5" height="32.0"/><rect x="631" y="553.0" width="5" height="37.0"/><rect x="639" y="550.0" width="5" height="40.0"/><rect x="647" y="544.0" width="5" height="46.0"/><rect x="655" y="542.0" width="5" height="48.0"/><rect x="663" y="534.0" width="5" height="56.0"/><rect x="671" y="517.0" width="5" height="73.0"/><rect x="679" y="512.0" width="5" height="78.0"/><rect x="687" y="514.0" width="5" height="76.0"/><rect x="695" y="522.0" width="5" height="68.0"/><rect x="703" y="542.0" width="5" height="48.0"/><rect x="711" y="563.0" width="5" height="27.0"/><rect x="719" y="583.0" width="5" height="7.0"/><rect x="727" y="590" width="5" height="6"/><rect x="735" y="590" width="5" height="15"/><rect x="743" y="590" width="5" height="28"/><rect x="751" y="590" width="5" height="38"/><rect x="759" y="590" width="5" height="34"/><rect x="767" y="590" width="5" height="34"/><rect x="775" y="590" width="5" height="30"/><rect x="783" y="590" width="5" height="30"/></g></g><path d="M987 137.5H990 M987 169.5H990 M987 201.5H990 M987 233.5H990 M987 265.5H990 M987 297.5H990 M987 330.5H990 M987 362.5H990 M987 394.5H990 M987 426.5H990 M987 458.5H990 M987 490.5H990 M987 496.5H990 M987 686.5H989 M9.5 688V691 M73.5 688V691 M137.5 688V691 M201.5 688V691 M265.5 688V691 M329.5 688V691 M393.5 688V691 M457.5 688V691 M521.5 688V691 M585.5 688V691 M649.5 688V691 M713.5 688V691 M777.5 688V691" stroke="#FFF" stroke-width="1" shape-rendering="crispEdges"/></svg>
<div class="ct cp" style="left:993px;top:131px">1.9075</div><div class="ct cp" style="left:993px;top:163px">1.8920</div><div class="ct cp" style="left:993px;top:195px">1.8760</div><div class="ct cp" style="left:993px;top:227px">1.8605</div><div class="ct cp" style="left:993px;top:259px">1.8450</div><div class="ct cp" style="left:993px;top:291px">1.8290</div><div class="ct cp" style="left:993px;top:324px">1.8130</div><div class="ct cp" style="left:993px;top:356px">1.7975</div><div class="ct cp" style="left:993px;top:388px">1.7815</div><div class="ct cp" style="left:993px;top:420px">1.7660</div><div class="ct cp" style="left:993px;top:452px">1.7505</div><div class="ct cp" style="left:993px;top:484px">1.7345</div><div class="ct" style="left:990px;top:496px">100</div><div class="ct" style="left:989px;top:528px">80</div><div class="ct" style="left:989px;top:547px">70</div><div class="ct" style="left:989px;top:623px">30</div><div class="ct" style="left:989px;top:642px">20</div><div class="ct" style="left:989px;top:675px">0</div><div class="ct cd" style="left:8px;top:691px">11 Apr 2006</div><div class="ct cd" style="left:72px;top:691px">21 Apr 2006</div><div class="ct cd" style="left:136px;top:691px">3 May 2006</div><div class="ct cd" style="left:200px;top:691px">15 May 2006</div><div class="ct cd" style="left:264px;top:691px">25 May 2006</div><div class="ct cd" style="left:328px;top:691px">6 Jun 2006</div><div class="ct cd" style="left:392px;top:691px">16 Jun 2006</div><div class="ct cd" style="left:456px;top:691px">28 Jun 2006</div><div class="ct cd" style="left:520px;top:691px">10 Jul 2006</div><div class="ct cd" style="left:584px;top:691px">20 Jul 2006</div><div class="ct cd" style="left:648px;top:691px">1 Aug 2006</div><div class="ct cd" style="left:712px;top:691px">11 Aug 2006</div><div class="ct cd" style="left:776px;top:691px">23 Aug 2006</div><div class="ct" style="left:13px;top:106px">GBPUSD,Daily</div><div class="ct" style="left:83px;top:106px">1.8934</div><div class="ct" style="left:114px;top:106px">1.8972</div><div class="ct" style="left:145px;top:106px">1.8871</div><div class="ct" style="left:175.5px;top:106px">1.8889</div><div class="ct" style="left:13px;top:498px">RSI(8) 51.6816</div><div class="ct" style="left:82px;top:498px">=&gt;MA(14) 60.5314</div><div class="ct" style="left:169px;top:498px">Stoch(7,3,3) 50.6024 48.8186</div><div class="ct" style="left:297px;top:498px">OsMA(12,26,9) -0.002725</div><div class="pricebox">1.8889</div>
<div id="tabs">
 <div class="abs" style="left:0;top:0;width:1024px;height:2px;background:#fff"></div>
 <div class="abs" style="left:0;top:2px;width:1024px;height:1px;background:#000"></div>
 <div class="abs" style="left:0;top:3px;width:2px;height:19px;background:#a0a0a0"></div>
 <div class="abs" style="left:92px;top:2px;width:1px;height:15px;background:#000"></div>
 <div class="tab" style="left:16px">USDJPY,Daily</div>
 <div class="abs" style="left:93px;top:0px;width:87px;height:21px;background:#fff;border-right:1px solid #000;border-bottom:1px solid #000"></div>
 <div class="tab" style="left:102px;color:#000">GBPUSD,Daily</div>
 <div class="tab" style="left:191px">USDCAD,Daily</div><div class="tsep" style="left:272px"></div>
 <div class="tab" style="left:281px">EURUSD,Daily</div><div class="tsep" style="left:360px"></div>
 <div class="tab" style="left:371px">AUDUSD,Daily</div><div class="tsep" style="left:452px"></div>
 <div class="tab" style="left:462px">EURJPY,H4</div><div class="tsep" style="left:528px"></div>
 <div class="tab" style="left:537px">USDCHF,Daily</div><div class="tsep" style="left:616px"></div>
 <div class="tab" style="left:625px">EURCHF,Daily</div><div class="tsep" style="left:705px"></div>
 <div class="tab" style="left:714px">EURGBP,Daily</div><div class="tsep" style="left:792px"></div>
 <div class="tab" style="left:802px">GOLD,Daily</div><div class="tsep" style="left:868px"></div>
 <svg class="abs" style="left:992px;top:8px" width="30" height="10"><path d="M8 1L4 5L8 9Z M22 1L26 5L22 9Z" fill="#8c8c8c"/></svg>
 <div class="abs" style="left:0;top:21px;width:1024px;height:1px;background:#fafafa"></div>
</div>
<div id="status">
 <div class="ssep" style="left:152px"></div>
 <div class="st" style="left:158px;font-weight:bold">Default</div>
 <div class="ssep" style="left:317px"></div>
 <div class="st" style="left:322px">2006.06.13 00:00</div>
 <div class="ssep" style="left:432px"></div>
 <div class="st" style="left:437px">O: 1.8420</div>
 <div class="ssep" style="left:518px"></div>
 <div class="st" style="left:523px">H: 1.8453</div>
 <div class="ssep" style="left:604px"></div>
 <div class="st" style="left:610px">L: 1.8316</div>
 <div class="ssep" style="left:690px"></div>
 <div class="st" style="left:695px">C: 1.8326</div>
 <div class="ssep" style="left:776px"></div>
 <div class="st" style="left:781px">V: 12331</div>
 <div class="ssep" style="left:862px"></div>
 <svg class="abs" style="left:864px;top:0px" width="30" height="20"><rect x="4" y="5" width="2" height="9" fill="#4f7f10"/><rect x="4" y="15" width="2" height="2" fill="#a01010"/><rect x="7" y="5" width="2" height="8" fill="#4f7f10"/><rect x="7" y="14" width="2" height="3" fill="#a01010"/><rect x="10" y="5" width="2" height="7" fill="#4f7f10"/><rect x="10" y="13" width="2" height="4" fill="#a01010"/><rect x="13" y="5" width="2" height="6" fill="#4f7f10"/><rect x="13" y="12" width="2" height="5" fill="#a01010"/><rect x="16" y="5" width="2" height="5" fill="#4f7f10"/><rect x="16" y="11" width="2" height="6" fill="#a01010"/><rect x="19" y="5" width="2" height="4" fill="#4f7f10"/><rect x="19" y="10" width="2" height="7" fill="#a01010"/><rect x="22" y="5" width="2" height="3" fill="#4f7f10"/><rect x="22" y="9" width="2" height="8" fill="#a01010"/><rect x="25" y="5" width="2" height="2" fill="#4f7f10"/><rect x="25" y="8" width="2" height="9" fill="#a01010"/></svg>
 <div class="st" style="left:923px;font-weight:bold">50/0 kb</div>
 <svg class="abs" style="left:1008px;top:6px" width="14" height="14"><path d="M13 1L1 13M13 5L5 13M13 9L9 13" stroke="#a0a0a0" stroke-width="1.2"/></svg>
</div>
<div id="ime" class="abs" style="left:5px;top:722px;width:126px;height:26px;background:#c0c0c0;border:1px solid #222;border-top-color:#fff;border-left-color:#fff">
 <div class="abs" style="left:2px;top:2px;width:19px;height:20px;background:#c0c0c0;border:1px solid #fff;border-right-color:#000;border-bottom-color:#000"><svg width="17" height="18"><path d="M2 9V5q0-3 3-3h1q3 0 3 3v4M9 9V5q0-3 3-3h1q3 0 3 3v4" fill="none" stroke="#111" stroke-width="3"/><path d="M2 9V5q0-3 3-3h1q3 0 3 3v4M9 9V5q0-3 3-3h1q3 0 3 3v4" fill="none" stroke="#f0f000" stroke-width="1.6"/><path d="M6 5L3 16M6 5v11M2 12h4" stroke="#1030e0" stroke-width="2" fill="none"/><path d="M15 10q-3-2-5 0M10 14q2 2 5 0" stroke="#e01010" stroke-width="1.8" fill="none"/></svg></div>
 <div class="abs" style="left:22px;top:2px;width:39px;height:20px;background:#c0c0c0;border:1px solid #fff;border-right-color:#000;border-bottom-color:#000;font:16px/18px 'Liberation Sans',sans-serif;color:#000;text-align:center">标准</div>
 <div class="abs" style="left:62px;top:2px;width:19px;height:20px;background:#c0c0c0;border:1px solid #fff;border-right-color:#000;border-bottom-color:#000"><svg width="17" height="18"><circle cx="8.5" cy="9.5" r="6.5" fill="#000"/><circle cx="5" cy="5.5" r="6.2" fill="#c0c0c0"/></svg></div>
 <div class="abs" style="left:82px;top:2px;width:19px;height:20px;background:#c0c0c0;border:1px solid #fff;border-right-color:#000;border-bottom-color:#000"><svg width="17" height="18"><rect x="3.5" y="7.5" width="3" height="3" fill="none" stroke="#000"/><rect x="10" y="7" width="3" height="4" fill="#000"/><path d="M12.5 11v2l-1 1" stroke="#000" fill="none"/></svg></div>
 <div class="abs" style="left:102px;top:2px;width:20px;height:20px;background:#c0c0c0;border:1px solid #fff;border-right-color:#000;border-bottom-color:#000"><svg width="18" height="18"><rect x="0" y="4" width="18" height="10" fill="#9a9a9a"/><path d="M1.5 6.5h3M6 6.5h3M10.5 6.5h3M15 6.5h2M2 9h2M5 9h3M9.5 9h3M14 9h3M2 11.5h5M8 11.5h4M13 11.5h4" stroke="#f4f4f4" stroke-width="1.3"/></svg></div>
</div>
<div id="bottom"></div>
</body></html>
